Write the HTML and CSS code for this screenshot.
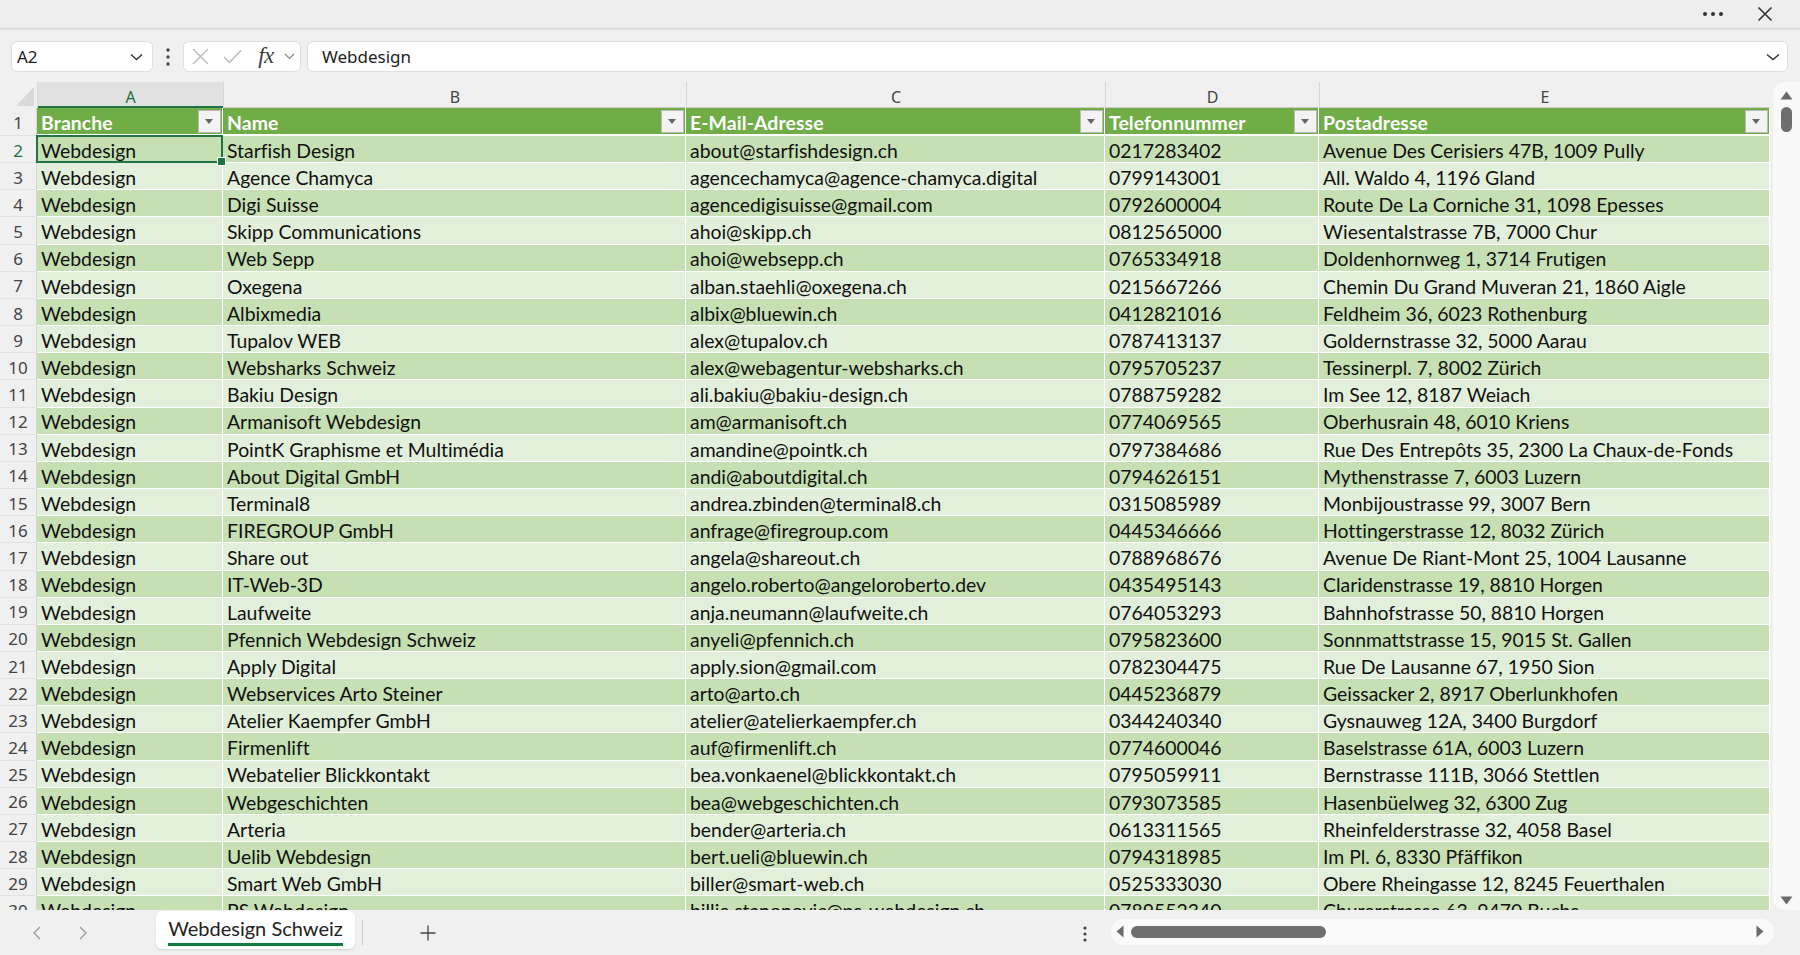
FILE: index.html
```html
<!DOCTYPE html>
<html lang="de">
<head>
<meta charset="utf-8">
<title>Webdesign Schweiz</title>
<link rel="stylesheet" href="styles.css">
</head>
<body>
<div class="titlebar">
  <svg class="more" width="22" height="6" viewBox="0 0 22 6"><circle cx="3" cy="3" r="2" fill="#333"/><circle cx="11" cy="3" r="2" fill="#333"/><circle cx="19" cy="3" r="2" fill="#333"/></svg>
  <svg class="close" width="16" height="16" viewBox="0 0 16 16"><path d="M1.5 1.5 L14.5 14.5 M14.5 1.5 L1.5 14.5" stroke="#333" stroke-width="1.6" fill="none"/></svg>
</div>

<div class="formula-row">
  <div class="namebox">
    <span>A2</span>
    <svg width="13" height="8" viewBox="0 0 13 8"><path d="M1 1.5 L6.5 6.5 L12 1.5" stroke="#333" stroke-width="1.4" fill="none"/></svg>
  </div>
  <div class="vdots"><svg width="4" height="18" viewBox="0 0 4 18"><circle cx="2" cy="2" r="1.7" fill="#444"/><circle cx="2" cy="9" r="1.7" fill="#444"/><circle cx="2" cy="16" r="1.7" fill="#444"/></svg></div>
  <div class="fxbox">
    <span class="fxslot"><svg width="17" height="17" viewBox="0 0 17 17"><path d="M1 1 L16 16 M16 1 L1 16" stroke="#b9b9b9" stroke-width="1.4" fill="none"/></svg></span>
    <span class="fxslot"><svg width="19" height="15" viewBox="0 0 19 15"><path d="M1 8 L6.5 13.5 L18 1.5" stroke="#b9b9b9" stroke-width="1.4" fill="none"/></svg></span>
    <span class="fxslot fx">fx</span>
    <span class="fxchev"><svg width="11" height="7" viewBox="0 0 11 7"><path d="M1 1 L5.5 5.5 L10 1" stroke="#888" stroke-width="1.2" fill="none"/></svg></span>
  </div>
  <div class="formula-input">
    <span>Webdesign</span>
    <svg width="14" height="8" viewBox="0 0 14 8"><path d="M1 1.5 L7 6.5 L13 1.5" stroke="#333" stroke-width="1.4" fill="none"/></svg>
  </div>
</div>

<div class="sheet-area">
  <div class="sheet">
    <div class="row colhead">
      <div class="corner"></div>
      <div class="ch ch-active">A</div>
      <div class="ch">B</div>
      <div class="ch">C</div>
      <div class="ch">D</div>
      <div class="ch">E</div>
    </div>
    <div class="row head">
      <div class="rn">1</div>
      <div class="c"><span>Branche</span><i class="filter"></i></div>
      <div class="c"><span>Name</span><i class="filter"></i></div>
      <div class="c"><span>E-Mail-Adresse</span><i class="filter"></i></div>
      <div class="c"><span>Telefonnummer</span><i class="filter"></i></div>
      <div class="c"><span>Postadresse</span><i class="filter"></i></div>
    </div>
    <div class="row dark"><div class="rn rn-active">2</div><div class="c selected"><span>Webdesign</span></div><div class="c"><span>Starfish Design</span></div><div class="c"><span>about@starfishdesign.ch</span></div><div class="c"><span>0217283402</span></div><div class="c"><span>Avenue Des Cerisiers 47B, 1009 Pully</span></div></div>
    <div class="row light"><div class="rn">3</div><div class="c"><span>Webdesign</span></div><div class="c"><span>Agence Chamyca</span></div><div class="c"><span>agencechamyca@agence-chamyca.digital</span></div><div class="c"><span>0799143001</span></div><div class="c"><span>All. Waldo 4, 1196 Gland</span></div></div>
    <div class="row dark"><div class="rn">4</div><div class="c"><span>Webdesign</span></div><div class="c"><span>Digi Suisse</span></div><div class="c"><span>agencedigisuisse@gmail.com</span></div><div class="c"><span>0792600004</span></div><div class="c"><span>Route De La Corniche 31, 1098 Epesses</span></div></div>
    <div class="row light"><div class="rn">5</div><div class="c"><span>Webdesign</span></div><div class="c"><span>Skipp Communications</span></div><div class="c"><span>ahoi@skipp.ch</span></div><div class="c"><span>0812565000</span></div><div class="c"><span>Wiesentalstrasse 7B, 7000 Chur</span></div></div>
    <div class="row dark"><div class="rn">6</div><div class="c"><span>Webdesign</span></div><div class="c"><span>Web Sepp</span></div><div class="c"><span>ahoi@websepp.ch</span></div><div class="c"><span>0765334918</span></div><div class="c"><span>Doldenhornweg 1, 3714 Frutigen</span></div></div>
    <div class="row light"><div class="rn">7</div><div class="c"><span>Webdesign</span></div><div class="c"><span>Oxegena</span></div><div class="c"><span>alban.staehli@oxegena.ch</span></div><div class="c"><span>0215667266</span></div><div class="c"><span>Chemin Du Grand Muveran 21, 1860 Aigle</span></div></div>
    <div class="row dark"><div class="rn">8</div><div class="c"><span>Webdesign</span></div><div class="c"><span>Albixmedia</span></div><div class="c"><span>albix@bluewin.ch</span></div><div class="c"><span>0412821016</span></div><div class="c"><span>Feldheim 36, 6023 Rothenburg</span></div></div>
    <div class="row light"><div class="rn">9</div><div class="c"><span>Webdesign</span></div><div class="c"><span>Tupalov WEB</span></div><div class="c"><span>alex@tupalov.ch</span></div><div class="c"><span>0787413137</span></div><div class="c"><span>Goldernstrasse 32, 5000 Aarau</span></div></div>
    <div class="row dark"><div class="rn">10</div><div class="c"><span>Webdesign</span></div><div class="c"><span>Websharks Schweiz</span></div><div class="c"><span>alex@webagentur-websharks.ch</span></div><div class="c"><span>0795705237</span></div><div class="c"><span>Tessinerpl. 7, 8002 Zürich</span></div></div>
    <div class="row light"><div class="rn">11</div><div class="c"><span>Webdesign</span></div><div class="c"><span>Bakiu Design</span></div><div class="c"><span>ali.bakiu@bakiu-design.ch</span></div><div class="c"><span>0788759282</span></div><div class="c"><span>Im See 12, 8187 Weiach</span></div></div>
    <div class="row dark"><div class="rn">12</div><div class="c"><span>Webdesign</span></div><div class="c"><span>Armanisoft Webdesign</span></div><div class="c"><span>am@armanisoft.ch</span></div><div class="c"><span>0774069565</span></div><div class="c"><span>Oberhusrain 48, 6010 Kriens</span></div></div>
    <div class="row light"><div class="rn">13</div><div class="c"><span>Webdesign</span></div><div class="c"><span>PointK Graphisme et Multimédia</span></div><div class="c"><span>amandine@pointk.ch</span></div><div class="c"><span>0797384686</span></div><div class="c"><span>Rue Des Entrepôts 35, 2300 La Chaux-de-Fonds</span></div></div>
    <div class="row dark"><div class="rn">14</div><div class="c"><span>Webdesign</span></div><div class="c"><span>About Digital GmbH</span></div><div class="c"><span>andi@aboutdigital.ch</span></div><div class="c"><span>0794626151</span></div><div class="c"><span>Mythenstrasse 7, 6003 Luzern</span></div></div>
    <div class="row light"><div class="rn">15</div><div class="c"><span>Webdesign</span></div><div class="c"><span>Terminal8</span></div><div class="c"><span>andrea.zbinden@terminal8.ch</span></div><div class="c"><span>0315085989</span></div><div class="c"><span>Monbijoustrasse 99, 3007 Bern</span></div></div>
    <div class="row dark"><div class="rn">16</div><div class="c"><span>Webdesign</span></div><div class="c"><span>FIREGROUP GmbH</span></div><div class="c"><span>anfrage@firegroup.com</span></div><div class="c"><span>0445346666</span></div><div class="c"><span>Hottingerstrasse 12, 8032 Zürich</span></div></div>
    <div class="row light"><div class="rn">17</div><div class="c"><span>Webdesign</span></div><div class="c"><span>Share out</span></div><div class="c"><span>angela@shareout.ch</span></div><div class="c"><span>0788968676</span></div><div class="c"><span>Avenue De Riant-Mont 25, 1004 Lausanne</span></div></div>
    <div class="row dark"><div class="rn">18</div><div class="c"><span>Webdesign</span></div><div class="c"><span>IT-Web-3D</span></div><div class="c"><span>angelo.roberto@angeloroberto.dev</span></div><div class="c"><span>0435495143</span></div><div class="c"><span>Claridenstrasse 19, 8810 Horgen</span></div></div>
    <div class="row light"><div class="rn">19</div><div class="c"><span>Webdesign</span></div><div class="c"><span>Laufweite</span></div><div class="c"><span>anja.neumann@laufweite.ch</span></div><div class="c"><span>0764053293</span></div><div class="c"><span>Bahnhofstrasse 50, 8810 Horgen</span></div></div>
    <div class="row dark"><div class="rn">20</div><div class="c"><span>Webdesign</span></div><div class="c"><span>Pfennich Webdesign Schweiz</span></div><div class="c"><span>anyeli@pfennich.ch</span></div><div class="c"><span>0795823600</span></div><div class="c"><span>Sonnmattstrasse 15, 9015 St. Gallen</span></div></div>
    <div class="row light"><div class="rn">21</div><div class="c"><span>Webdesign</span></div><div class="c"><span>Apply Digital</span></div><div class="c"><span>apply.sion@gmail.com</span></div><div class="c"><span>0782304475</span></div><div class="c"><span>Rue De Lausanne 67, 1950 Sion</span></div></div>
    <div class="row dark"><div class="rn">22</div><div class="c"><span>Webdesign</span></div><div class="c"><span>Webservices Arto Steiner</span></div><div class="c"><span>arto@arto.ch</span></div><div class="c"><span>0445236879</span></div><div class="c"><span>Geissacker 2, 8917 Oberlunkhofen</span></div></div>
    <div class="row light"><div class="rn">23</div><div class="c"><span>Webdesign</span></div><div class="c"><span>Atelier Kaempfer GmbH</span></div><div class="c"><span>atelier@atelierkaempfer.ch</span></div><div class="c"><span>0344240340</span></div><div class="c"><span>Gysnauweg 12A, 3400 Burgdorf</span></div></div>
    <div class="row dark"><div class="rn">24</div><div class="c"><span>Webdesign</span></div><div class="c"><span>Firmenlift</span></div><div class="c"><span>auf@firmenlift.ch</span></div><div class="c"><span>0774600046</span></div><div class="c"><span>Baselstrasse 61A, 6003 Luzern</span></div></div>
    <div class="row light"><div class="rn">25</div><div class="c"><span>Webdesign</span></div><div class="c"><span>Webatelier Blickkontakt</span></div><div class="c"><span>bea.vonkaenel@blickkontakt.ch</span></div><div class="c"><span>0795059911</span></div><div class="c"><span>Bernstrasse 111B, 3066 Stettlen</span></div></div>
    <div class="row dark"><div class="rn">26</div><div class="c"><span>Webdesign</span></div><div class="c"><span>Webgeschichten</span></div><div class="c"><span>bea@webgeschichten.ch</span></div><div class="c"><span>0793073585</span></div><div class="c"><span>Hasenbüelweg 32, 6300 Zug</span></div></div>
    <div class="row light"><div class="rn">27</div><div class="c"><span>Webdesign</span></div><div class="c"><span>Arteria</span></div><div class="c"><span>bender@arteria.ch</span></div><div class="c"><span>0613311565</span></div><div class="c"><span>Rheinfelderstrasse 32, 4058 Basel</span></div></div>
    <div class="row dark"><div class="rn">28</div><div class="c"><span>Webdesign</span></div><div class="c"><span>Uelib Webdesign</span></div><div class="c"><span>bert.ueli@bluewin.ch</span></div><div class="c"><span>0794318985</span></div><div class="c"><span>Im Pl. 6, 8330 Pfäffikon</span></div></div>
    <div class="row light"><div class="rn">29</div><div class="c"><span>Webdesign</span></div><div class="c"><span>Smart Web GmbH</span></div><div class="c"><span>biller@smart-web.ch</span></div><div class="c"><span>0525333030</span></div><div class="c"><span>Obere Rheingasse 12, 8245 Feuerthalen</span></div></div>
    <div class="row dark"><div class="rn">30</div><div class="c"><span>Webdesign</span></div><div class="c"><span>PS Webdesign</span></div><div class="c"><span>billie.stanonovic@ps-webdesign.ch</span></div><div class="c"><span>0789552340</span></div><div class="c"><span>Churerstrasse 63, 9470 Buchs</span></div></div>
  </div>
  <div class="vscroll">
    <svg width="13" height="9" viewBox="0 0 13 9"><path d="M6.5 0.5 L12.5 8.5 L0.5 8.5 Z" fill="#6b6b6b"/></svg>
    <div class="vthumb"></div>
    <div class="vspacer"></div>
    <svg width="13" height="9" viewBox="0 0 13 9"><path d="M0.5 0.5 L12.5 0.5 L6.5 8.5 Z" fill="#6b6b6b"/></svg>
  </div>
</div>

<div class="bottombar">
  <div class="navbtn"><svg width="8" height="14" viewBox="0 0 8 14"><path d="M7 1 L1 7 L7 13" stroke="#9a9a9a" stroke-width="1.3" fill="none"/></svg></div>
  <div class="navbtn"><svg width="8" height="14" viewBox="0 0 8 14"><path d="M1 1 L7 7 L1 13" stroke="#9a9a9a" stroke-width="1.3" fill="none"/></svg></div>
  <div class="tab"><span>Webdesign Schweiz</span></div>
  <div class="tabsep"></div>
  <div class="addbtn"><svg width="16" height="16" viewBox="0 0 16 16"><path d="M8 0.5 V15.5 M0.5 8 H15.5" stroke="#444" stroke-width="1.3" fill="none"/></svg></div>
  <div class="spacer"></div>
  <div class="bdots"><svg width="4" height="16" viewBox="0 0 4 16"><circle cx="2" cy="2" r="1.6" fill="#444"/><circle cx="2" cy="8" r="1.6" fill="#444"/><circle cx="2" cy="14" r="1.6" fill="#444"/></svg></div>
  <div class="hscroll">
    <svg width="8" height="13" viewBox="0 0 8 13"><path d="M7.5 0.5 L7.5 12.5 L0.5 6.5 Z" fill="#6b6b6b"/></svg>
    <div class="hthumb"></div>
    <div class="hspacer"></div>
    <svg width="8" height="13" viewBox="0 0 8 13"><path d="M0.5 0.5 L0.5 12.5 L7.5 6.5 Z" fill="#6b6b6b"/></svg>
  </div>
</div>
</body>
</html>
```

FILE: styles.css
```css
* { box-sizing: border-box; }

html, body {
  margin: 0;
  padding: 0;
}

body {
  width: 1800px;
  height: 955px;
  overflow: hidden;
  background: #f0f0f0;
  font-family: "Noto Sans", "Open Sans", sans-serif;
  color: #222;
  font-variant-ligatures: none;
}

/* ---------- title bar ---------- */
.titlebar {
  height: 28px;
  display: flex;
  align-items: center;
  justify-content: flex-end;
  padding-right: 27px;
  gap: 33px;
  background: #eeeeee;
  box-shadow: 0 1px 2px rgba(0, 0, 0, 0.16);
  position: relative;
  z-index: 2;
}

/* ---------- formula row ---------- */
.formula-row {
  display: flex;
  align-items: center;
  height: 31px;
  margin-top: 13px;
  padding-left: 11px;
  padding-right: 12px;
}

.namebox {
  width: 142px;
  height: 31px;
  background: #fff;
  border: 1px solid #dedede;
  border-radius: 6px;
  display: flex;
  align-items: center;
  justify-content: space-between;
  padding: 0 9px 0 5px;
  font-size: 17px;
  color: #222;
}

.vdots {
  width: 30px;
  display: flex;
  justify-content: center;
  align-items: center;
}

.fxbox {
  width: 118px;
  height: 31px;
  background: #fff;
  border: 1px solid #dedede;
  border-radius: 6px;
  display: flex;
  align-items: center;
}

.fxslot {
  width: 32px;
  display: flex;
  justify-content: center;
  align-items: center;
}

.fx {
  width: 36px;
  font-family: "Liberation Serif", serif;
  font-style: italic;
  font-size: 23px;
  color: #3c3c3c;
  line-height: 1;
  padding-bottom: 3px;
  letter-spacing: -0.5px;
}

.fxchev {
  width: 14px;
  display: flex;
  align-items: center;
}

.formula-input {
  flex: 1;
  margin-left: 6px;
  height: 31px;
  background: #fff;
  border: 1px solid #dedede;
  border-radius: 6px;
  display: flex;
  align-items: center;
  justify-content: space-between;
  padding: 0 7px 0 14px;
  font-size: 17px;
  color: #222;
}

/* ---------- sheet ---------- */
.sheet-area {
  display: flex;
  margin-top: 10px;
  height: 828px;
}

.sheet {
  width: 1770px;
  height: 828px;
  overflow: hidden;
  flex: none;
}

.row {
  display: grid;
  grid-template-columns: 37px 186px 463px 419px 214px 451px;
}

.colhead {
  height: 26px;
  border-bottom: 1px solid #cdcdcd;
}

.corner {
  position: relative;
  background: #f0f0f0;
}

.corner::after {
  content: "";
  position: absolute;
  right: 3px;
  bottom: 2px;
  width: 18px;
  height: 19px;
  background: #d9d9d9;
  clip-path: polygon(100% 0, 100% 100%, 0 100%);
}

.ch {
  display: flex;
  align-items: center;
  justify-content: center;
  padding-top: 4px;
  font-size: 16px;
  color: #444;
  border-left: 1px solid #d6d6d6;
}

.ch-active {
  background: #e1e1e1;
  color: #1e6e42;
  box-shadow: inset 0 -2px 0 #217346;
}

.rn {
  display: flex;
  align-items: center;
  justify-content: center;
  padding-top: 2px;
  font-size: 17px;
  color: #444;
  background: #f0f0f0;
  border-right: 1px solid #d6d6d6;
  border-bottom: 1px solid #e2e2e2;
}

.rn-active {
  color: #217346;
}

.head {
  height: 28px;
}

.row.dark,
.row.light {
  height: 27.16px;
}

.c {
  display: flex;
  align-items: flex-end;
  padding: 0 1px 1.3px 4px;
  font-family: Lato, "Noto Sans", sans-serif;
  font-size: 19.4px;
  line-height: 20px;
  color: #111;
  white-space: nowrap;
  overflow: hidden;
  border-right: 1px solid #fff;
  border-bottom: 1px solid #fff;
}

.head .c {
  background: #70ad47;
  color: #fff;
  font-weight: 700;
  border-bottom: 2px solid #fff;
  padding-bottom: 1.3px;
  letter-spacing: 0.1px;
}

.head .c span {
  flex: 1;
}

.dark .c { background: #c6e0b4; }
.light .c { background: #e2efda; }

.filter {
  flex: none;
  align-self: center;
  width: 23px;
  height: 23px;
  margin-top: 2px;
  background: #f3f3f3;
  border: 1px solid #b9b9b9;
  position: relative;
}

.filter::after {
  content: "";
  position: absolute;
  left: 6px;
  top: 8px;
  border-left: 4.5px solid transparent;
  border-right: 4.5px solid transparent;
  border-top: 5px solid #666;
}

.c.selected {
  overflow: visible;
  position: relative;
}

.c.selected::before {
  content: "";
  position: absolute;
  left: -1px;
  top: -1px;
  right: -1px;
  bottom: -1px;
  border: 2px solid #217346;
}

.c.selected::after {
  content: "";
  position: absolute;
  right: -4px;
  bottom: -4px;
  width: 7px;
  height: 7px;
  background: #217346;
  border: 1px solid #fff;
}

/* ---------- vertical scrollbar ---------- */
.vscroll {
  width: 27px;
  margin-left: 3px;
  height: 828px;
  background: #f9f9f9;
  border-radius: 12px 0 0 12px;
  display: flex;
  flex-direction: column;
  align-items: center;
  padding: 9px 0 5px 0;
}

.vthumb {
  width: 11px;
  height: 25px;
  margin-top: 7px;
  background: #6e6e6e;
  border-radius: 6px;
}

.vspacer { flex: 1; }

/* ---------- bottom bar ---------- */
.bottombar {
  height: 45px;
  display: flex;
  align-items: center;
  padding-left: 14px;
  background: #f0f0f0;
}

.navbtn {
  width: 46px;
  height: 30px;
  display: flex;
  align-items: center;
  justify-content: center;
}

.tab {
  align-self: flex-start;
  margin-top: 1px;
  margin-left: 50px;
  width: 199px;
  height: 38px;
  background: #fff;
  border-radius: 6px;
  box-shadow: 0 1px 2px rgba(0, 0, 0, 0.12);
  display: flex;
  justify-content: center;
  padding-top: 4px;
}

.tab span {
  display: inline-block;
  height: 31px;
  font-family: Lato, "Noto Sans", sans-serif;
  font-size: 20px;
  line-height: 26px;
  color: #222;
  border-bottom: 3px solid #107c41;
}

.tabsep {
  width: 1px;
  height: 25px;
  margin-left: 7px;
  background: #c8c8c8;
}

.addbtn {
  width: 40px;
  margin-left: 45px;
  display: flex;
  justify-content: center;
  align-items: center;
}

.spacer { flex: 1; }

.bdots {
  width: 20px;
  display: flex;
  justify-content: center;
  padding-top: 3px;
}

.hscroll {
  width: 663px;
  height: 26px;
  margin-left: 16px;
  margin-right: 26px;
  margin-top: -2px;
  background: #fafafa;
  border-radius: 13px;
  display: flex;
  align-items: center;
  padding: 0 10px 0 5px;
}

.hthumb {
  width: 195px;
  height: 12px;
  margin-left: 7px;
  background: #6e6e6e;
  border-radius: 6px;
}

.hspacer { flex: 1; }
```
